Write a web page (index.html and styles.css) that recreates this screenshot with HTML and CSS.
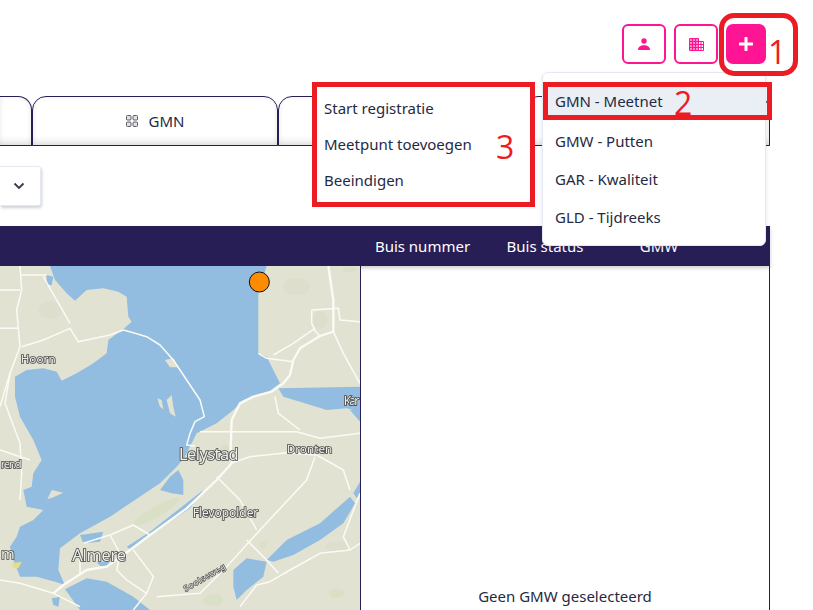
FILE: index.html
```html
<!DOCTYPE html>
<html lang="nl">
<head>
<meta charset="utf-8">
<title>GMN</title>
<link rel="stylesheet" href="styles.css">
</head>
<body>
<div class="page">
  <header class="top">
    <button class="icon-btn" aria-label="Gebruiker">
      <svg width="12" height="12" viewBox="0 0 12 12"><circle cx="6" cy="3" r="2.700" fill="#ff1493"/><path d="M0 12c0-3.200 2.600-4.800 6-4.800s6 1.600 6 4.800z" fill="#ff1493"/></svg>
    </button>
    <button class="icon-btn" aria-label="Organisatie">
      <svg width="15" height="13" viewBox="0 0 15 13"><path d="M.5.500h9v12h-9z" fill="#ff8cc8"/><path d="M9.500 3.500h5v9h-5z" fill="#fff" stroke="#ff1493"/><path d="M.5.500h9v12h-9zM.5 3.500h9M.5 6.500h14M.5 9.500h14M3.500.5v12M6.500.5v12M12 3.500v9" stroke="#ff1493" stroke-width="1" fill="none"/></svg>
    </button>
    <button class="icon-btn solid" aria-label="Toevoegen">
      <svg width="14" height="14" viewBox="0 0 14 14"><path d="M7 1v12M1 7h12" stroke="#fff" stroke-width="3" stroke-linecap="round"/></svg>
    </button>
  </header>

  <nav class="tabs">
    <div class="tab tab-cut"></div>
    <div class="tab">
      <svg class="grid-icon" width="12" height="12" viewBox="0 0 12 12"><g fill="#e2e2e6" stroke="#5c5c66" stroke-width="1"><rect x=".5" y=".5" width="4.500" height="4.500" rx="1"/><rect x="7" y=".5" width="4.500" height="4.500" rx="1"/><rect x=".5" y="7" width="4.500" height="4.500" rx="1"/><rect x="7" y="7" width="4.500" height="4.500" rx="1"/></g></svg>
      <span>GMN</span>
    </div>
    <div class="tab"></div>
    <div class="tab"></div>
  </nav>

  <div class="filter">
    <div class="select">
      <svg width="12" height="8" viewBox="0 0 12 8"><path d="M1.500 1.500 6 6l4.500-4.500" fill="none" stroke="#333a45" stroke-width="1.800"/></svg>
    </div>
  </div>

  <div class="bar">
    <span></span>
    <span>Buis nummer</span>
    <span>Buis status</span>
    <span>GMW</span>
  </div>

  <main class="content">
    <div class="map">
      <svg class="map-svg" width="360" height="344" viewBox="0 18 1080 1032">
        <rect x="0" y="18" width="1080" height="1032" fill="#e2e2d3"/>
        <g fill="#d9e0c6">
          <ellipse cx="470" cy="755" rx="80" ry="16" transform="rotate(-30 470 755)"/>
          <ellipse cx="675" cy="565" rx="12" ry="10"/>
          <ellipse cx="1050" cy="28" rx="24" ry="8"/>
          <ellipse cx="640" cy="1020" rx="30" ry="18"/>
          <ellipse cx="1010" cy="1000" rx="24" ry="14"/>
          <ellipse cx="790" cy="855" rx="10" ry="10"/>
        </g>
        <g fill="#dedecd">
          <ellipse cx="150" cy="150" rx="36" ry="26"/>
          <ellipse cx="960" cy="180" rx="22" ry="26"/>
          <ellipse cx="1010" cy="860" rx="36" ry="16"/>
          <ellipse cx="890" cy="80" rx="40" ry="26"/>
        </g>
        <g fill="#92bde0">
          <path d="M150 18 165 60 200 100 225 122 260 90 310 85 355 95 380 110 385 170 395 185 370 208 345 225 325 240 320 280 280 310 230 340 185 362 170 335 130 325 80 330 45 350 45 410 60 470 100 540 125 600 100 640 95 680 70 690 80 740 130 750 100 780 60 800 50 830 30 860 40 900 60 950 110 950 165 965 195 975 175 930 180 865 240 820 330 770 480 670 530 620 555 590 590 520 650 490 700 450 730 420 800 400 840 370 800 290 775 280 775 100 800 18Z"/>
          <path d="M835 385 1080 380V455L1040 445 980 450 900 425 850 410Z"/>
          <path d="M195 988 260 955 320 965 400 1010 450 1050H240Z"/>
          <path d="M800 900 860 840 960 790 1050 710 1065 730 1030 790 960 840 880 885 820 905Z"/>
          <path d="M700 930 740 895 800 905 790 950 740 990 710 1020 700 980Z"/>
          <path d="M240 825 310 815 300 845 250 850Z"/>
          <path d="M480 690 510 650 535 630 550 660 550 705 515 700Z"/>
          <path d="M380 860 450 815 610 690 570 745 450 825 390 868Z"/>
          <path d="M1060 700 1080 665V700L1070 715Z"/>
          <path d="M1050 450 1080 445V485Z"/>
          <path d="M155 1015 180 1010 175 1040 160 1035Z"/>
          <path d="M140 45 160 50 155 75 140 75Z"/>
          <path d="M290 905 330 905 320 918 300 918Z"/>
        </g>
        <g fill="#e2e2d3">
          <path d="M495 300 520 295 535 322 510 322Z"/>
          <path d="M472 415 485 420 490 448 480 440Z"/>
          <path d="M500 420 515 405 520 440 527 470 510 460Z"/>
          <path d="M142 718 155 690 190 698 160 712Z"/>
        </g>
        <path d="M35 910 65 905 55 925 40 925Z" fill="#e8de8a"/>
        <g class="roads">
          <path d="M370 210 400 218 440 230 480 255 520 300 560 360 600 420 613 470 585 485 570 520 560 555 585 558"/>
          <path class="wide" d="M985 18 1000 120V215L960 228 900 265 880 300 870 345 850 370 815 395 760 410 720 430 695 480 692 560 695 610 650 660 560 745 450 825 390 870 320 920 260 930 190 975 160 1000"/>
          <path d="M1000 215 1030 280 1080 370"/>
          <path d="M775 280 800 295 880 305"/>
          <path d="M820 285 880 250 940 208 960 228"/>
          <path d="M935 150 1015 145 1020 180 1080 185"/>
          <path d="M935 150V190L945 210"/>
          <path d="M600 515H890L960 535 1080 520"/>
          <path d="M825 410 835 460 900 510"/>
          <path d="M692 610 750 590 860 578 950 585 1030 630 1050 690"/>
          <path d="M945 590 920 660 780 810 680 920 600 1000 470 1010"/>
          <path d="M650 650 720 720 770 810"/>
          <path d="M740 840 800 900 835 940"/>
          <path d="M810 965 870 930 960 880 1050 870 1080 850"/>
          <path d="M1050 870 1030 830 1080 700"/>
          <path d="M60 18 65 90 50 150 60 260 30 340 0 440"/>
          <path d="M65 260 130 240 210 205 235 245 330 225 370 210"/>
          <path d="M130 50 210 190"/>
          <path d="M0 90H60M0 205H55M60 45H140"/>
          <path d="M30 340 15 430 60 550 65 640 60 720"/>
          <path d="M0 570 90 600"/>
          <path d="M250 850 330 825 400 795 450 825"/>
          <path d="M330 825 360 880 350 930 380 960 440 1000 400 1050"/>
          <path d="M400 870 460 950 440 1000"/>
          <path d="M0 960 60 970 160 1000 240 1040"/>
          <path d="M810 965 770 975 720 1040"/>
          <path d="M240 880V940"/>
        </g>
        <g class="labels">
          <text x="62" y="310" font-size="35" textLength="105">Hoorn</text>
          <text x="2" y="623" font-size="35" textLength="63">rend</text>
          <text x="1031" y="435" font-size="36" textLength="47">Kar</text>
          <text x="537" y="600" font-size="49" textLength="179">Lelystad</text>
          <text x="860" y="580" font-size="35" textLength="137">Dronten</text>
          <text x="578" y="771" font-size="36" textLength="197">Flevopolder</text>
          <text x="217" y="903" font-size="49" textLength="161">Almere</text>
          <text x="3" y="897" font-size="44" textLength="40">m</text>
          <text class="small" font-size="24" transform="translate(557 995) rotate(-30)" textLength="140">Soolseweg</text>
        </g>
        <circle cx="778" cy="66" r="30" fill="#ff8c00" stroke="#111" stroke-width="3"/>
      </svg>
    </div>
    <div class="detail">
      <p class="empty">Geen GMW geselecteerd</p>
    </div>
  </main>

  <div class="dropdown">
    <div class="item active">GMN - Meetnet</div>
    <div class="item">GMW - Putten</div>
    <div class="item">GAR - Kwaliteit</div>
    <div class="item">GLD - Tijdreeks</div>
  </div>

  <div class="note note-one"><span class="num">1</span></div>
  <div class="note note-two"><span class="num">2</span></div>
  <div class="note note-three">
    <div class="sub">Start registratie</div>
    <div class="sub">Meetpunt toevoegen</div>
    <div class="sub">Beeindigen</div>
    <span class="num">3</span>
  </div>
</div>
</body>
</html>
```

FILE: styles.css
```css
* { box-sizing: border-box; }
html, body { margin: 0; padding: 0; background: #fff; }
body {
  font-family: "Noto Sans", "Open Sans", sans-serif;
  font-size: 15px;
  color: #1f2a44;
}
.page {
  position: relative;
  width: 813px;
  height: 610px;
  overflow: hidden;
}
.top {
  height: 96px;
  display: flex;
  justify-content: flex-end;
  align-items: flex-start;
  gap: 8px;
  padding: 24px 47px 0 0;
}
.icon-btn {
  width: 44px;
  height: 40px;
  padding: 0;
  display: flex;
  align-items: center;
  justify-content: center;
  background: #fff;
  border: 2px solid #ff1493;
  border-radius: 6px;
}
.icon-btn.solid {
  width: 40px;
  background: #ff1493;
  border-radius: 7px;
}
.tabs {
  width: 770px;
  height: 50px;
  display: flex;
  border-bottom: 1px solid #281e56;
}
.tab {
  flex: none;
  width: 246px;
  height: 50px;
  display: flex;
  align-items: center;
  justify-content: center;
  gap: 11px;
  background: #fff;
  border: 1px solid #281e56;
  border-radius: 14px 14px 0 0;
  box-shadow: inset 0 -6px 8px -4px rgba(0,0,0,.14), inset 0 0 6px rgba(0,0,0,.05);
}
.tab-cut {
  width: 32px;
  border-left: 0;
  border-radius: 0 14px 0 0;
}
.filter {
  width: 770px;
  height: 80px;
  padding-top: 20px;
}
.select {
  width: 41px;
  height: 40px;
  display: flex;
  align-items: center;
  justify-content: flex-end;
  padding-right: 15px;
  background: #fff;
  border: 1px solid #e6e9f0;
  border-left: 0;
  border-radius: 0 3px 3px 0;
  box-shadow: 1px 2px 3px rgba(60,70,100,.25);
}
.bar {
  position: relative;
  width: 770px;
  height: 40px;
  display: grid;
  grid-template-columns: 356px 133px 112px 116px;
  align-items: center;
  text-align: center;
  color: #fff;
  background: #281e56;
  box-shadow: 0 2px 4px rgba(0,0,0,.2);
}
.content {
  width: 770px;
  height: 344px;
  display: flex;
}
.map {
  flex: none;
  width: 360px;
  height: 344px;
  overflow: hidden;
}
.map-svg {
  display: block;
  filter: blur(.5px);
}
.roads path {
  fill: none;
  stroke: #fbfbf6;
  stroke-width: 4.500;
  stroke-linejoin: round;
}
.roads path.wide { stroke-width: 7; }
.labels text {
  font-family: "Noto Sans", sans-serif;
  fill: #eeeeea;
  stroke: #4a4a4a;
  stroke-width: 5;
  paint-order: stroke;
}
.labels text.small { stroke-width: 4; }
.detail {
  flex: 1;
  display: flex;
  align-items: flex-end;
  justify-content: center;
  border-left: 1px solid #281e56;
  border-right: 1px solid #281e56;
}
.empty {
  margin: 0 0 3px;
  line-height: 22px;
}
.dropdown {
  position: absolute;
  left: 542px;
  top: 72px;
  width: 224px;
  height: 174px;
  padding-top: 9px;
  background: #fff;
  border: 1px solid #e4e9f1;
  border-radius: 6px;
  box-shadow: 0 2px 4px rgba(40,40,80,.12);
}
.item {
  height: 38px;
  line-height: 38px;
  padding-left: 12px;
}
.item.active {
  background: #eaeff5;
  margin-bottom: 2px;
}
.note {
  position: absolute;
  border: 5px solid #ed1c24;
}
.num {
  position: absolute;
  font-family: "Open Sans", sans-serif;
  font-size: 32px;
  line-height: 32px;
  color: #ed1c24;
}
.note-one {
  left: 719px;
  top: 13px;
  width: 79px;
  height: 63px;
  border-radius: 15px;
}
.note-one .num { left: 44px; top: 18px; }
.note-two {
  left: 543px;
  top: 82px;
  width: 229px;
  height: 38px;
}
.note-two .num { left: 126px; top: 0; }
.note-three {
  left: 312px;
  top: 82px;
  width: 223px;
  height: 125px;
  padding: 3px 7px;
  background: #fff;
}
.sub {
  height: 36px;
  line-height: 36px;
}
.note-three .num { left: 179px; top: 44px; }
```
